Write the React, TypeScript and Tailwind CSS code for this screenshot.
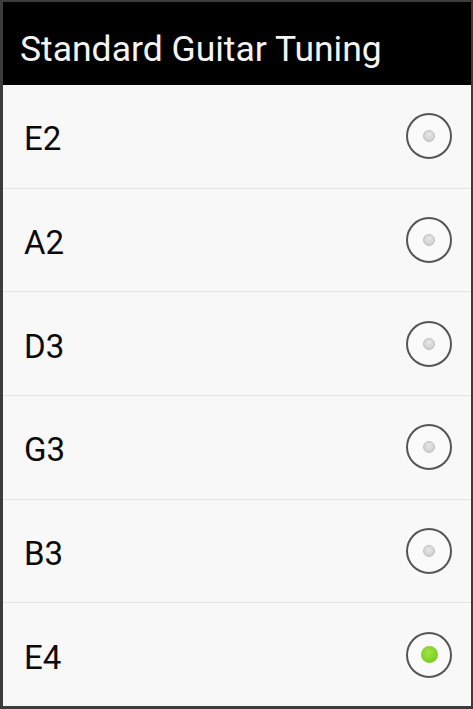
import React from "react";

const notes = ["E2", "A2", "D3", "G3", "B3", "E4"];

function Radio({ checked }: { checked: boolean }) {
  return (
    <div className="w-[46px] h-[46px] rounded-full border-2 border-[#555] flex items-center justify-center bg-[#fafafa]">
      {checked ? (
        <div className="w-[17px] h-[17px] rounded-full bg-[radial-gradient(circle_at_45%_40%,#a0e63e,#6ac218)]" />
      ) : (
        <div className="w-[12px] h-[12px] rounded-full bg-[radial-gradient(circle_at_50%_35%,#e8e8e8,#c8c8c8)] border border-[#c0c0c0]" />
      )}
    </div>
  );
}

export default function App() {
  return (
    <div
      className="w-[473px] h-[709px] bg-[#3c3c3c] pt-[2px] pl-[3px] pr-[2px] pb-[3px] flex flex-col overflow-hidden"
      style={{ fontFamily: "Roboto, 'Noto Sans', sans-serif" }}
    >
      <div className="h-[83px] bg-black flex items-start pt-[30px] pl-[17px] shrink-0">
        <span className="text-[#f4f4f4] text-[35.5px] leading-none">Standard Guitar Tuning</span>
      </div>
      <div className="flex-1 bg-[#f8f8f8] flex flex-col">
        {notes.map((n, i) => (
          <div
            key={n}
            className={`flex-1 flex items-center justify-between pl-[21px] pr-[19px] ${
              i < notes.length - 1 ? "border-b border-[#e4e4e4]" : ""
            }`}
          >
            <span className="text-[33px] text-[#0a0a0a] leading-none mt-[5px]">{n}</span>
            <Radio checked={i === notes.length - 1} />
          </div>
        ))}
      </div>
    </div>
  );
}
